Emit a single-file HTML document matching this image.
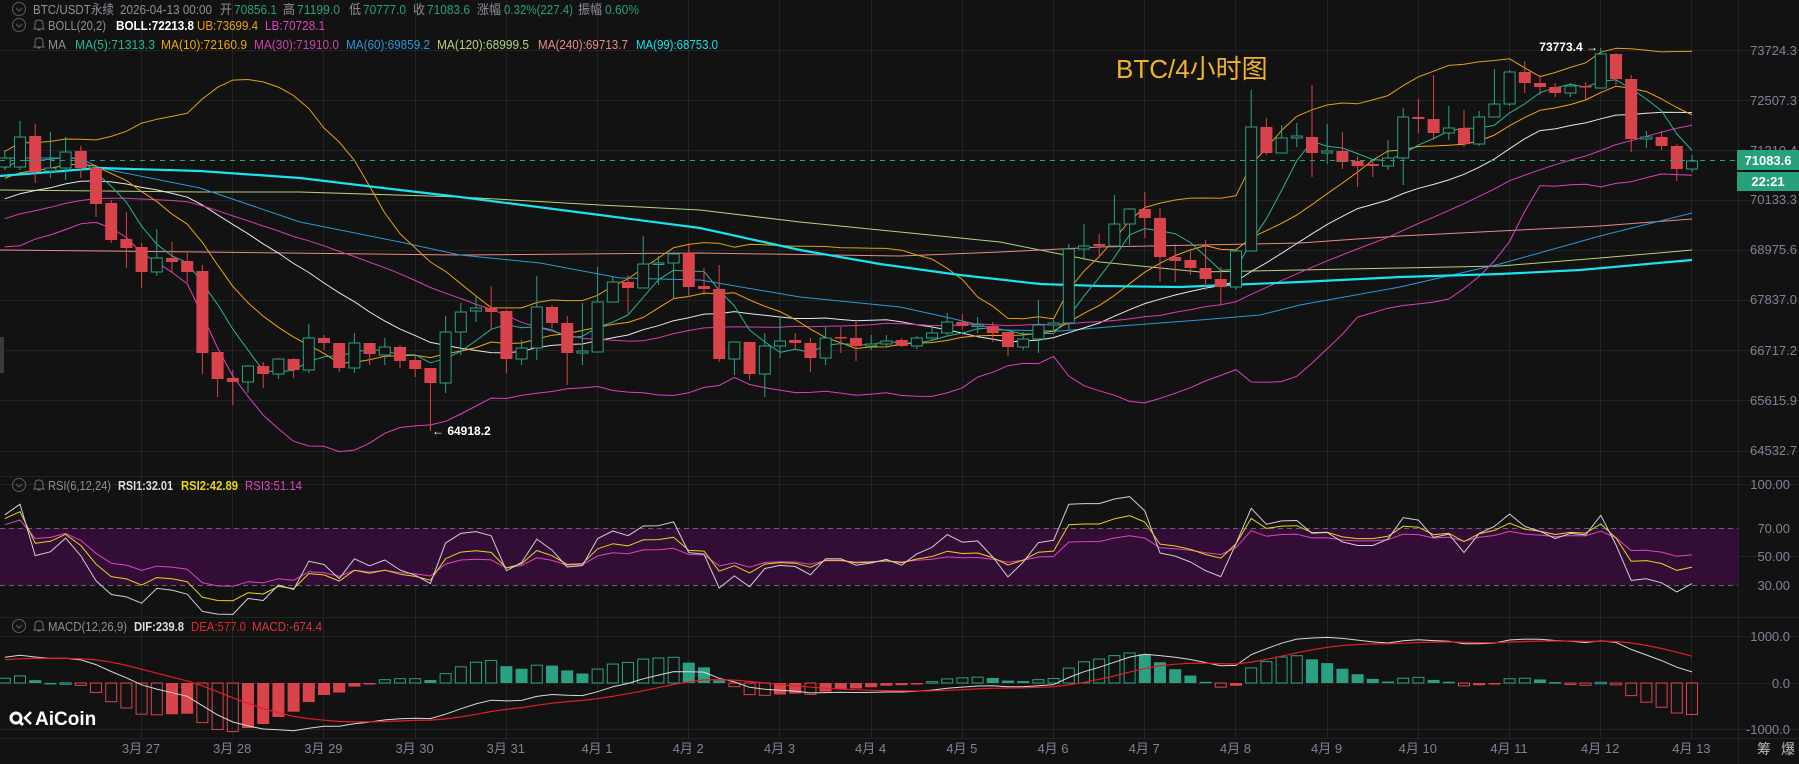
<!DOCTYPE html>
<html><head><meta charset="utf-8">
<style>
html,body{margin:0;padding:0;background:#121212;width:1799px;height:764px;overflow:hidden;}
svg{display:block}
text{font-family:"Liberation Sans","Noto Sans CJK SC",sans-serif;}
</style></head>
<body>
<svg id="s" width="1799" height="764" xmlns="http://www.w3.org/2000/svg"></svg>
<script>
const D=[
[167,158,150,170],[167,137,121,170],[136,172,124,183],[171,168,132,178],[168,152,137,180],[151,168,146,178],
[168,204,165,217],[203,240,200,243],[239,248,212,268],[247,272,243,288],[272,258,229,276],[258,262,242,272],
[261,272,252,282],[271,353,265,374],[352,379,352,397],[378,382,370,405],[382,366,365,393],[366,374,362,388],
[374,359,358,379],[359,370,358,378],[370,338,324,373],[338,343,335,350],[343,368,343,372],[368,343,333,373],
[343,354,343,365],[355,347,338,365],[347,361,345,368],[360,369,355,377],[368,383,368,431],[383,332,316,393],
[332,312,303,355],[311,308,295,322],[308,312,286,330],[311,359,310,373],[359,348,340,365],[348,307,276,360],
[307,323,305,328],[323,353,316,385],[353,351,303,365],[352,302,267,352],[302,282,276,302],[282,288,275,313],
[288,264,236,288],[264,263,256,285],[263,254,252,298],[253,287,243,297],[286,289,268,295],[289,359,265,362],
[359,342,342,375],[342,374,342,380],[374,346,333,397],[346,341,317,358],[340,343,333,350],[343,358,338,372],
[358,338,327,365],[337,338,327,353],[338,346,322,361],[346,344,335,350],[344,341,335,347],[340,346,338,347],
[346,338,336,349],[338,333,328,340],[333,322,313,335],[322,326,314,330],[326,325,317,333],[326,333,322,342],
[332,347,332,356],[347,339,332,350],[339,325,300,353],[325,323,320,330],[323,249,244,330],[249,246,224,260],
[244,246,234,258],[246,224,195,246],[224,209,208,245],[209,218,192,238],[218,257,208,282],[257,261,244,282],
[260,268,250,275],[268,279,240,290],[279,287,267,305],[287,251,250,290],[251,127,90,251],[127,153,118,155],
[153,138,125,153],[138,136,123,147],[137,153,85,177],[153,151,124,164],[151,162,132,169],[161,166,156,187],
[164,166,160,177],[166,158,140,170],[158,117,108,185],[117,119,99,133],[119,133,75,140],[133,128,106,140],
[128,144,110,147],[144,117,111,146],[117,104,69,117],[104,72,70,106],[72,83,61,93],[83,87,75,95],
[87,93,83,97],[93,86,83,97],[86,87,82,101],[88,54,48,88],[54,79,53,85],[79,139,75,152],
[139,137,131,148],[137,146,131,150],[146,169,144,181],[169,161,155,172]];
const N=D.length;
const P0=73724.3,K=3005;
const toP=y=>P0*Math.exp(-(y-49)/K);
const toY=p=>49+K*Math.log(P0/p);
const X=i=>1692-(N-1-i)*15.2;
let pre=[];
for(let k=0;k<60;k++){let y=k<30?285+8*Math.sin(k*1.7):285-(k-29)*4+6*Math.sin(k*2.3);pre.push(toP(y));}
const C=pre.concat(D.map(d=>toP(d[1])));
const OFF=pre.length;
const G='#2aa183',R='#d9434b';
let s='';
s+='<g stroke="#232323" stroke-width="1">';
[50,100,150,200,250,300,350,400,451,476,484,556,617,636,683,729,738].forEach(y=>{s+=`<line x1="0" y1="${y+.5}" x2="1799" y2="${y+.5}"/>`});
for(let d=0;d<18;d++){let x=Math.round(141+d*91.2)+.5;s+=`<line x1="${x}" y1="0" x2="${x}" y2="738"/>`;}
s+='<line x1="1738.5" y1="0" x2="1738.5" y2="764"/>';
s+='</g>';
s+='<rect x="0" y="528" width="1738" height="57" fill="#320e37"/>';
s+='<line x1="0" y1="528.5" x2="1738" y2="528.5" stroke="#666" stroke-dasharray="5,4"/>';
s+='<line x1="0" y1="585.5" x2="1738" y2="585.5" stroke="#666" stroke-dasharray="5,4"/>';
s+='<defs><clipPath id="cm"><rect x="0" y="0" width="1738" height="476"/></clipPath><clipPath id="cr"><rect x="0" y="477" width="1738" height="140"/></clipPath><clipPath id="cd"><rect x="0" y="618" width="1738" height="120"/></clipPath></defs>';
function pl(pts,col,w,clip){return `<polyline clip-path="url(#${clip||'cm'})" fill="none" stroke="${col}" stroke-width="${w||1}" stroke-linejoin="round" points="${pts.map(p=>p[0].toFixed(1)+','+p[1].toFixed(1)).join(' ')}"/>`;}
const MA240=[[0,250],[200,252],[460,255],[700,253],[900,256],[1000,252],[1100,247],[1200,245],[1300,243],[1400,236],[1500,231],[1600,226],[1692,219]];
const MA120=[[0,190],[200,192],[300,192],[460,197],[600,205],[700,210],[800,222],[900,232],[1000,242],[1100,262],[1200,272],[1300,270],[1400,268],[1500,266],[1600,258],[1692,250]];
const MA60=[[0,158],[80,158],[100,168],[200,188],[300,222],[400,242],[460,255],[540,263],[620,278],[700,280],[800,297],[900,307],[950,318],[1000,330],[1060,331],[1120,326],[1200,320],[1260,315],[1300,305],[1400,287],[1500,264],[1600,236],[1692,213]];
const MA99=[[0,176],[100,168],[200,171],[300,178],[400,190],[460,197],[600,215],[700,228],[800,250],[880,264],[960,275],[1040,284],[1100,286],[1180,287],[1300,282],[1400,277],[1500,274],[1580,270],[1692,260]];
s+=pl(MA240,'#e98c86');s+=pl(MA120,'#b3d27f');s+=pl(MA60,'#2c98d8');
function sma(i,n){let t=0;for(let k=i-n+1;k<=i;k++)t+=C[k];return t/n;}
let m5=[],m10=[],m30=[],bm=[],bu=[],bl=[];
for(let i=0;i<N;i++){const g=i+OFF,x=X(i);
m5.push([x,toY(sma(g,5))]);m10.push([x,toY(sma(g,10))]);m30.push([x,toY(sma(g,30))]);
const m=sma(g,20);let v=0;for(let k=g-19;k<=g;k++)v+=(C[k]-m)**2;const sd=Math.sqrt(v/20);
bm.push([x,toY(m)]);bu.push([x,toY(m+2*sd)]);bl.push([x,toY(m-2*sd)]);}
s+=pl(bu,'#e3a10f');s+=pl(bl,'#de3fbf');s+=pl(bm,'#e8e8e8');
s+=pl(m30,'#d23fae');s+=pl(m10,'#efa70a');s+=pl(MA99,'#19e3ef',2.2);s+=pl(m5,'#25b597');
for(let i=0;i<N;i++){const [o,c,h,l]=D[i];const x=X(i);const up=c<=o;const col=up?G:R;
const top=Math.min(o,c),bh=Math.max(1.5,Math.abs(o-c));
s+=`<line x1="${x.toFixed(1)}" y1="${h}" x2="${x.toFixed(1)}" y2="${top}" stroke="${col}"/>`;
s+=`<line x1="${x.toFixed(1)}" y1="${top+bh}" x2="${x.toFixed(1)}" y2="${l}" stroke="${col}"/>`;
if(up)s+=`<rect x="${(x-5.5).toFixed(1)}" y="${top}" width="11" height="${bh}" fill="#121212" stroke="${col}"/>`;
else s+=`<rect x="${(x-6).toFixed(1)}" y="${top}" width="12" height="${bh}" fill="${col}"/>`;}
s+='<line x1="0" y1="160.5" x2="1738" y2="160.5" stroke="#26a17b" stroke-dasharray="5,5"/>';
s+='<text x="1598" y="51" fill="#fff" font-size="12" font-weight="bold" text-anchor="end">73773.4 →</text>';
s+='<text x="432" y="435" fill="#fff" font-size="12" font-weight="bold">← 64918.2</text>';
s+='<text x="1116" y="78" fill="#f2b22a" font-size="26">BTC/4小时图</text>';
function rsi(n){let out=[],up=0,dn=0;for(let k=1;k<C.length;k++){const d=C[k]-C[k-1];up=(Math.max(d,0)+(n-1)*up)/n;dn=(Math.max(-d,0)+(n-1)*dn)/n;out[k]=dn==0?100:100*up/(up+dn);}return out;}
const ry=v=>585-(v-30)*1.4286;
[[6,'#cfcfcf'],[12,'#e6d51c'],[24,'#de44bf']].reverse().forEach(([n,col])=>{const r=rsi(n);let pts=[];for(let i=0;i<N;i++)pts.push([X(i),ry(r[i+OFF])]);s+=pl(pts,col,1,'cr');});
let e12=C[0],e26=C[0],dea=0,dif=[],de=[],hs=[];
for(let k=0;k<C.length;k++){e12=e12+(C[k]-e12)*2/13;e26=e26+(C[k]-e26)*2/27;const d=e12-e26;dea=dea+(d-dea)*2/10;dif.push(d);de.push(dea);hs.push(2*(d-dea));}
const my=v=>683-v*0.0465;
for(let i=0;i<N;i++){const g=i+OFF,h=hs[g],hp=hs[g-1],x=X(i);const y0=683,y1=my(h);const t=Math.min(y0,y1),hh=Math.max(1.5,Math.abs(y1-y0));
if(h>=0){ if(h>=hp)s+=`<rect x="${(x-5.5).toFixed(1)}" y="${t}" width="11" height="${hh}" fill="none" stroke="${G}"/>`;else s+=`<rect x="${(x-6).toFixed(1)}" y="${t}" width="12" height="${hh}" fill="${G}"/>`;}
else{ if(h<=hp)s+=`<rect x="${(x-5.5).toFixed(1)}" y="${t}" width="11" height="${hh}" fill="none" stroke="${R}"/>`;else s+=`<rect x="${(x-6).toFixed(1)}" y="${t}" width="12" height="${hh}" fill="${R}"/>`;}}
let dp=[],ep=[];for(let i=0;i<N;i++){dp.push([X(i),my(dif[i+OFF])]);ep.push([X(i),my(de[i+OFF])]);}
s+=pl(dp,'#d8d8d8',1,'cd');s+=pl(ep,'#e41c2a',1.2,'cd');
const ax='#7c8497';
[['73724.3',50],['72507.3',100],['71310.4',150],['70133.3',199],['68975.6',249],['67837.0',299],['66717.2',350],['65615.9',400],['64532.7',450]].forEach(([t,y])=>{s+=`<text x="1750" y="${y+5}" fill="${ax}" font-size="13">${t}</text>`});
[['100.00',484],['70.00',528],['50.00',556],['30.00',585]].forEach(([t,y])=>{s+=`<text x="1790" y="${y+5}" fill="${ax}" font-size="13" text-anchor="end">${t}</text>`});
[['1000.0',636],['0.0',683],['-1000.0',729]].forEach(([t,y])=>{s+=`<text x="1790" y="${y+5}" fill="${ax}" font-size="13" text-anchor="end">${t}</text>`});
s+='<rect x="1737" y="150" width="62" height="20" fill="#26a17b"/><text x="1768" y="165" fill="#fff" font-size="13" font-weight="bold" text-anchor="middle">71083.6</text>';
s+='<rect x="1737" y="172" width="62" height="19" fill="#26a17b"/><text x="1768" y="186" fill="#fff" font-size="13" font-weight="bold" text-anchor="middle">22:21</text>';
const dl=['3月 27','3月 28','3月 29','3月 30','3月 31','4月 1','4月 2','4月 3','4月 4','4月 5','4月 6','4月 7','4月 8','4月 9','4月 10','4月 11','4月 12','4月 13'];
dl.forEach((t,d)=>{s+=`<text x="${141+d*91.2}" y="753" fill="${ax}" font-size="13" text-anchor="middle">${t}</text>`});
s+='<text x="1764" y="754" fill="#bbb" font-size="14" text-anchor="middle">筹</text><text x="1788" y="754" fill="#bbb" font-size="14" text-anchor="middle">爆</text>';
s+='<rect x="0" y="337" width="4" height="36" fill="#3a3a3a"/>';
function circ(y){return `<circle cx="19" cy="${y}" r="6.5" fill="none" stroke="#5a5d63"/><path d="M16 ${y-1} L19 ${y+2} L22 ${y-1}" fill="none" stroke="#5a5d63"/>`;}
function bell(x,y){return `<path d="M${x-4} ${y+3} L${x-4} ${y-1} Q${x-4} ${y-5} ${x} ${y-5} Q${x+4} ${y-5} ${x+4} ${y-1} L${x+4} ${y+3} L${x+5} ${y+4} L${x-5} ${y+4} Z M${x-1.5} ${y+5} L${x+1.5} ${y+5}" fill="none" stroke="#6a6e76"/>`;}
function T(x,y,w,t,c,b){return `<text x="${x}" y="${y}" font-size="13" fill="${c}"${b?' font-weight="bold"':''} textLength="${w}" lengthAdjust="spacingAndGlyphs">${t}</text>`;}
const gy='#8c909a',gr='#26a17b';
s+=circ(9);
[[33,81,'BTC/USDT永续',gy],[120,92,'2026-04-13 00:00',gy],[220,12,'开',gy],[234,43,'70856.1',gr],[283,12,'高',gy],[297,43,'71199.0',gr],[349,12,'低',gy],[363,43,'70777.0',gr],[413,12,'收',gy],[427,43,'71083.6',gr],[477,24,'涨幅',gy],[504,69,'0.32%(227.4)',gr],[578,24,'振幅',gy],[605,34,'0.60%',gr]].forEach(a=>{s+=T(a[0],14,a[1],a[2],a[3])});
s+=circ(25)+bell(39,25);
s+=T(48,30,58,'BOLL(20,2)',gy)+T(116,30,78,'BOLL:72213.8','#fff',1)+T(197,30,61,'UB:73699.4','#e9a30c')+T(265,30,60,'LB:70728.1','#de44bf');
s+=bell(39,43);
[[48,18,'MA',gy],[75,80,'MA(5):71313.3','#22b899'],[161,86,'MA(10):72160.9','#efa70a'],[254,85,'MA(30):71910.0','#d23fae'],[346,84,'MA(60):69859.2','#2c98d8'],[437,92,'MA(120):68999.5','#b3d27f'],[538,90,'MA(240):69713.7','#e98c86'],[636,82,'MA(99):68753.0','#19e3ef']].forEach(a=>{s+=T(a[0],49,a[1],a[2],a[3])});
s+=circ(485)+bell(39,485);
s+=T(48,490,63,'RSI(6,12,24)',gy)+T(118,490,55,'RSI1:32.01','#ddd',1)+T(181,490,57,'RSI2:42.89','#e6d51c',1)+T(245,490,57,'RSI3:51.14','#de44bf');
s+=circ(626)+bell(39,626);
s+=T(48,631,79,'MACD(12,26,9)',gy)+T(134,631,50,'DIF:239.8','#ddd',1)+T(191,631,55,'DEA:577.0','#e0282e')+T(252,631,70,'MACD:-674.4','#d9363e');
s+='<circle cx="16" cy="718" r="5" fill="none" stroke="#fff" stroke-width="3"/><path d="M19 721 L23 725" stroke="#fff" stroke-width="3"/><path d="M31 712 L25 718 L31 724" fill="none" stroke="#fff" stroke-width="2.5"/>';
s+='<text x="35" y="725" fill="#fff" font-size="19" font-weight="bold">AiCoin</text>';
document.getElementById('s').innerHTML=s;
</script>
</body></html>
